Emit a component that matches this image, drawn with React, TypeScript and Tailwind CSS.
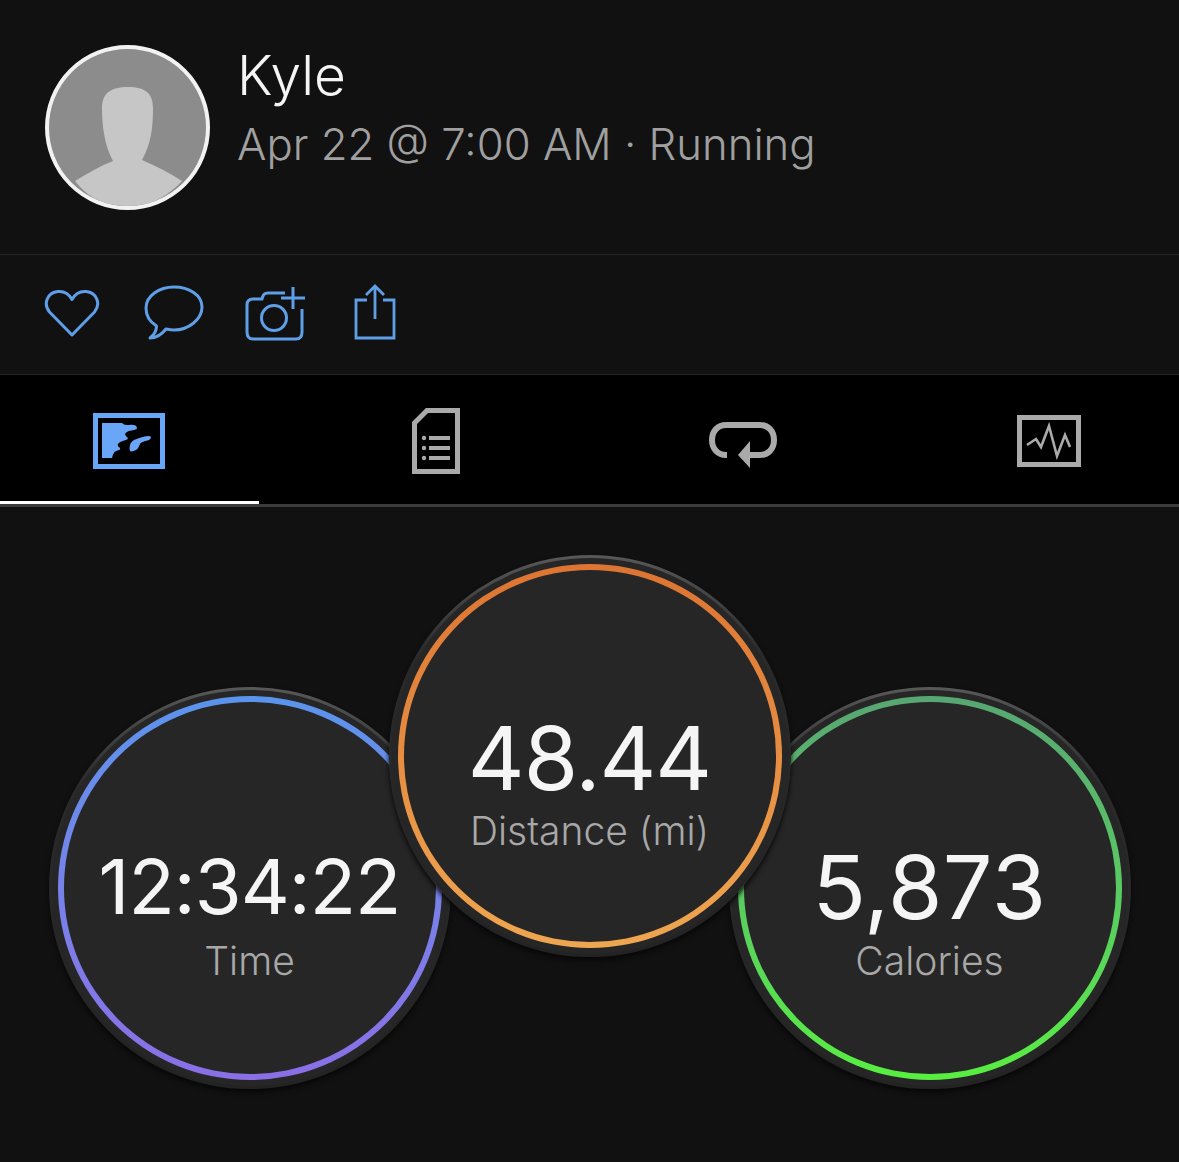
const font = { fontFamily: "Inter, 'Liberation Sans', sans-serif" };

function HeartIcon() {
  return (
    <svg width="56" height="48" viewBox="0 0 56 48" fill="none" stroke="#5e9fe8" strokeWidth="3" strokeLinejoin="round">
      <path d="M28 46 L5.5 23 C-1 15 3 3.5 14 2.5 C20 2 25 5 28 10.5 C31 5 36 2 42 2.5 C53 3.5 57 15 50.5 23 Z" />
    </svg>
  );
}

function BubbleIcon() {
  return (
    <svg width="60" height="56" viewBox="0 0 60 56" fill="none" stroke="#5e9fe8" strokeWidth="3" strokeLinejoin="round">
      <path d="M30 2 C45 2 58 10 58 22 C58 34 45 45 30 45 C27 45 24.5 44.5 22 44 C18 49 12 53 6 53 C10 50 12.5 46 12.5 41 C6 37 2 30 2 23 C2 11 15 2 30 2 Z" />
    </svg>
  );
}

function CameraIcon() {
  return (
    <svg width="62" height="56" viewBox="0 0 62 56" fill="none" stroke="#5e9fe8" strokeWidth="3">
      <path d="M40 8 H23 C19 8 18 10 17 14 H8 C4 14 2 16 2 20 V47 C2 52 4 54 8 54 H51 C55 54 57 52 57 47 V24" />
      <circle cx="29" cy="33" r="12.5" />
      <path d="M36 13 H60 M48 2 V24" />
    </svg>
  );
}

function ShareIcon() {
  return (
    <svg width="42" height="56" viewBox="0 0 42 56" fill="none" stroke="#5e9fe8" strokeWidth="2.8">
      <path d="M13 16 H2 V54 H40 V16 H29" />
      <path d="M21 35 V2 M12 11 L21 2 L30 11" />
    </svg>
  );
}

function MapIcon() {
  return (
    <svg width="72" height="56" viewBox="0 0 72 56">
      <rect x="2.5" y="2.5" width="67" height="51" fill="none" stroke="#6aa6f8" strokeWidth="5" />
      <path
        fill="#6aa6f8"
        d="M9 10 H29 C31 12 33 12 36 12 C40 11 44 12 44 15 C44 17 39 17 36 18 C33 19 31 21 33 23 C35 25 36 26 33 27 C29 28 26 29 25 31 C24 33 26 34 27 35 C28 37 25 37 23 38 C21 39 20 41 19 45 H9 Z"
      />
      <path
        fill="#6aa6f8"
        d="M37 38 C36 34 37 29 41 27 C46 25 52 23 56 23 C59 23 58 26 56 27 C52 28 48 29 47 31 C46 33 45 36 43 37 C41 38 38 39 37 38 Z"
      />
    </svg>
  );
}

function ListIcon() {
  return (
    <svg width="48" height="66" viewBox="0 0 48 66" fill="none">
      <path d="M2.5 63.5 V15 L15 2.5 H45.5 V63.5 Z" stroke="#aaaaaa" strokeWidth="5" />
      <g fill="#aaaaaa">
        <circle cx="12" cy="30" r="2.2" />
        <circle cx="12" cy="40" r="2.2" />
        <circle cx="12" cy="50" r="2.2" />
        <rect x="17" y="28" width="21" height="4" />
        <rect x="17" y="38" width="21" height="4" />
        <rect x="17" y="48" width="21" height="4" />
      </g>
    </svg>
  );
}

function LapsIcon() {
  return (
    <svg width="68" height="46" viewBox="0 0 68 46" fill="none">
      <path d="M18 33 H17 C9 33 3 27 3 18 C3 9 9 3 17 3 H51 C59 3 65 9 65 18 C65 27 59 33 51 33 H38" stroke="#aaaaaa" strokeWidth="6" />
      <path d="M41 19 V46 L29 33 Z" fill="#aaaaaa" />
    </svg>
  );
}

function ChartIcon() {
  return (
    <svg width="64" height="52" viewBox="0 0 64 52" fill="none" stroke="#aaaaaa">
      <rect x="2.5" y="2.5" width="59" height="47" strokeWidth="5" />
      <path d="M10 30 L19 24 L24 32 L32 11 L40 41 L48 20 L53 32" strokeWidth="2.6" />
    </svg>
  );
}

function Avatar() {
  return (
    <div className="h-[165px] w-[165px] shrink-0 overflow-hidden rounded-full border-[4px] border-[#f2f2f2] bg-[#8c8c8c]">
      <svg width="157" height="157" viewBox="1 1 157 157">
        <path
          fill="#c6c6c6"
          d="M80 39 C97 39 105 45 105 60 C105 80 103 96 94 112 C108 118 122 125 134 133 C118 150 100 159 79 159 C58 159 40 150 27 133 C40 125 52 118 65 113 C57 98 54 80 54 60 C54 45 63 39 80 39 Z"
        />
      </svg>
    </div>
  );
}

function Stat({
  value,
  label,
  ring,
  className,
  textPad,
  valueSize,
  labelGap,
}: {
  value: string;
  label: string;
  ring: string;
  className: string;
  textPad: string;
  valueSize: string;
  labelGap: string;
}) {
  return (
    <div className={`h-[402px] w-[402px] shrink-0 rounded-full bg-gradient-to-b from-[#585858] via-[#2a2a2a] via-25% to-[#232323] p-[3px] shadow-[0_3px_5px_#070707] ${className}`}>
      <div className="h-full w-full rounded-full bg-[#262626] p-[6px]">
        <div className={`h-full w-full rounded-full p-[6px] ${ring}`}>
          <div className={`flex h-full w-full flex-col items-center rounded-full bg-[#262626] ${textPad}`}>
            <div className={`leading-[84px] text-[#f5f5f5] ${valueSize}`}>{value}</div>
            <div className={`text-[39px] leading-[40px] font-light text-[#a8a8a8] ${labelGap}`}>{label}</div>
          </div>
        </div>
      </div>
    </div>
  );
}

export default function App() {
  return (
    <div className="h-[1162px] w-[1179px] overflow-hidden bg-[#111111]" style={font}>
      <header className="flex h-[255px] gap-[27px] border-b border-[#252525] pt-[45px] pl-[45px]">
        <Avatar />
        <div>
          <div className="mt-[-3px] text-[55px] leading-[66px] font-light text-[#f5f5f5]">Kyle</div>
          <div className="mt-[11px] text-[43.7px] leading-[52px] font-light text-[#a0a0a0]">Apr 22 @ 7:00 AM · Running</div>
        </div>
      </header>

      <div className="flex h-[120px] items-center border-b border-[#252525] pb-[3px] pl-[44px]">
        <div className="w-[100px]"><HeartIcon /></div>
        <div className="w-[101px]"><BubbleIcon /></div>
        <div className="w-[109px]"><CameraIcon /></div>
        <div className="mb-[3px]"><ShareIcon /></div>
      </div>

      <nav className="flex h-[132px] border-b-[3px] border-[#3c3c3c] bg-black">
        <div className="flex w-[259px] items-center justify-center border-b-[3px] border-white pt-[6px] pr-[1px]"><MapIcon /></div>
        <div className="flex w-[353px] items-center justify-center pt-[3px]"><ListIcon /></div>
        <div className="flex w-[262px] items-center justify-center pt-[11px]"><LapsIcon /></div>
        <div className="flex flex-1 items-center justify-center pt-[2px] pl-[44px]"><ChartIcon /></div>
      </nav>

      <div className="flex justify-center pt-[48px]">
        <Stat
          value="12:34:22"
          label="Time"
          ring="bg-gradient-to-b from-[#5a94ec] to-[#8a6fe6]"
          className="mt-[132px] mr-[-62px]"
          textPad="pt-[142px]"
          valueSize="text-[76px] tracking-[-1px]"
          labelGap="mt-[13px]"
        />
        <Stat
          value="48.44"
          label="Distance (mi)"
          ring="bg-gradient-to-b from-[#dd7433] to-[#efa650]"
          className="relative z-10"
          textPad="pt-[146px]"
          valueSize="text-[88px] tracking-[-1px]"
          labelGap="mt-[11px]"
        />
        <Stat
          value="5,873"
          label="Calories"
          ring="bg-gradient-to-b from-[#58a672] to-[#58ee40]"
          className="mt-[132px] ml-[-62px]"
          textPad="pt-[143px]"
          valueSize="text-[88px] tracking-[0.5px]"
          labelGap="mt-[12px]"
        />
      </div>
    </div>
  );
}
